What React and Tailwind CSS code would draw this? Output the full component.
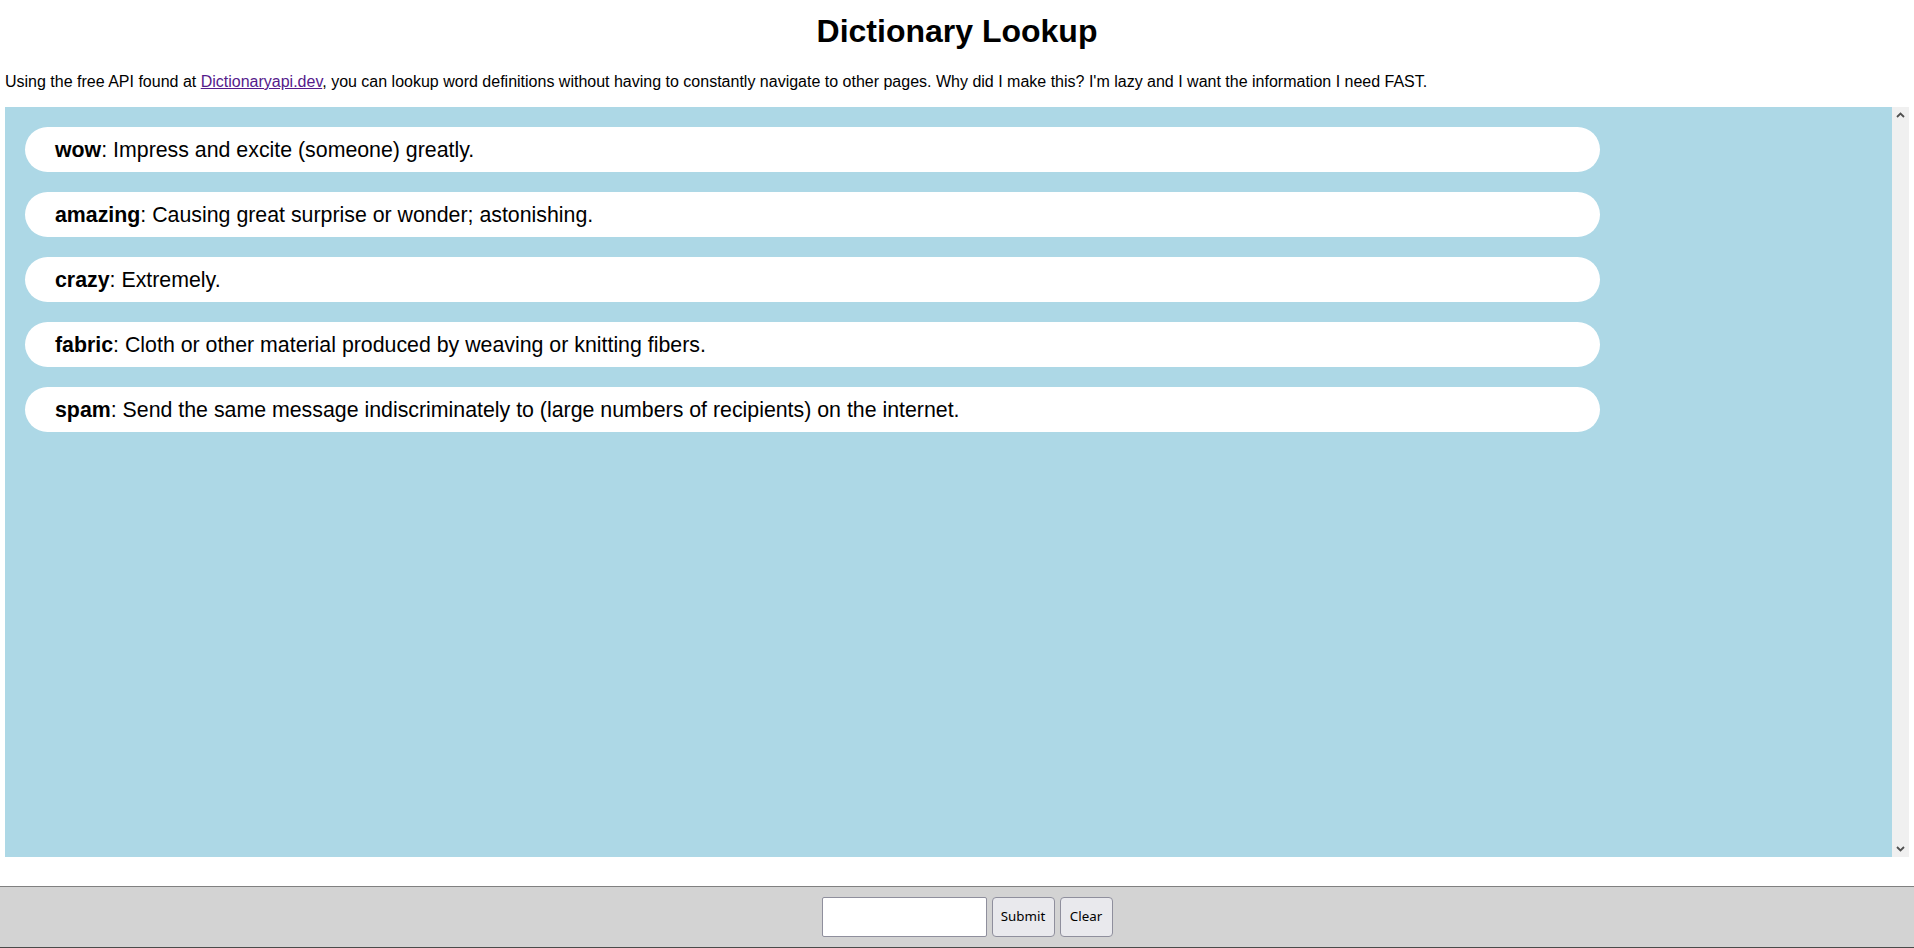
import React from "react";

const entries = [
  ["wow", "Impress and excite (someone) greatly."],
  ["amazing", "Causing great surprise or wonder; astonishing."],
  ["crazy", "Extremely."],
  ["fabric", "Cloth or other material produced by weaving or knitting fibers."],
  ["spam", "Send the same message indiscriminately to (large numbers of recipients) on the internet."],
];

export default function App() {
  return (
    <div className="flex h-[948px] flex-col bg-white text-black" style={{ fontFamily: '"Liberation Sans", Arial, sans-serif' }}>
      <div className="px-[5px]">
        <h1 className="mt-[13px] text-center text-[32px] font-bold leading-[37px]">Dictionary Lookup</h1>
        <p className="mt-[23px] text-[16px] leading-[18px]">
          Using the free API found at{" "}
          <a href="#" className="text-[#551a8b] underline">Dictionaryapi.dev</a>
          , you can lookup word definitions without having to constantly navigate to other pages. Why did I make this? I'm lazy and I want the information I need FAST.
        </p>
        <div className="mt-[16px] flex h-[750px]">
          <div className="flex flex-1 flex-col gap-[20px] bg-[#add8e6] pl-[20px] pt-[20px]">
            {entries.map(([w, d]) => (
              <div key={w} className="flex h-[45px] w-[1575px] items-center rounded-full bg-white pl-[30px] pt-[2px] text-[21.33px]">
                <span>
                  <b>{w}</b>: {d}
                </span>
              </div>
            ))}
          </div>
          <div className="flex w-[17px] flex-col items-center justify-between bg-[#f0f0f0] py-[5px]">
            <svg width="9" height="6" viewBox="0 0 9 6"><path d="M1 5 L4.5 1.5 L8 5" fill="none" stroke="#505050" strokeWidth="1.8" /></svg>
            <svg width="9" height="6" viewBox="0 0 9 6"><path d="M1 1 L4.5 4.5 L8 1" fill="none" stroke="#505050" strokeWidth="1.8" /></svg>
          </div>
        </div>
      </div>
      <div className="mt-auto flex h-[62px] items-center justify-center gap-[5px] border-t border-b border-t-[#808080] border-b-[#4a4a4a] bg-[#d3d3d3] pl-[20px]">
        <input className="h-[40px] w-[165px] rounded-[2px] border border-[#8f8f9d] bg-white px-1" />
        <button className="h-[40px] w-[63px] rounded-[4px] border border-[#8f8f9d] bg-[#e9e9ed] text-[13.33px]" style={{ fontFamily: '"Noto Sans", sans-serif' }}>Submit</button>
        <button className="h-[40px] w-[53px] rounded-[4px] border border-[#8f8f9d] bg-[#e9e9ed] text-[13.33px]" style={{ fontFamily: '"Noto Sans", sans-serif' }}>Clear</button>
      </div>
    </div>
  );
}
